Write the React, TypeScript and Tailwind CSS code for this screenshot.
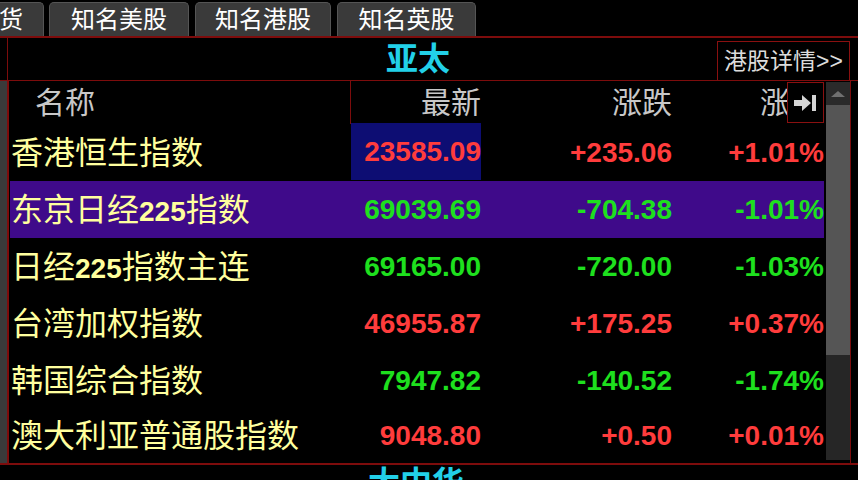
import React from 'react'

type Quote = {
  name: string
  last: string
  chg: string
  pct: string
  up: boolean
}

const quotes: Quote[] = [
  { name: '香港恒生指数', last: '23585.09', chg: '+235.06', pct: '+1.01%', up: true },
  { name: '东京日经225指数', last: '69039.69', chg: '-704.38', pct: '-1.01%', up: false },
  { name: '日经225指数主连', last: '69165.00', chg: '-720.00', pct: '-1.03%', up: false },
  { name: '台湾加权指数', last: '46955.87', chg: '+175.25', pct: '+0.37%', up: true },
  { name: '韩国综合指数', last: '7947.82', chg: '-140.52', pct: '-1.74%', up: false },
  { name: '澳大利亚普通股指数', last: '9048.80', chg: '+0.50', pct: '+0.01%', up: true },
]

// digits inside a name are drawn in the bold latin face
function Name({ text }: { text: string }) {
  return (
    <>
      {text.split(/(225)/).map((part, i) =>
        part === '225' ? (
          <span key={i} className="text-[28px] font-bold">
            {part}
          </span>
        ) : (
          <span key={i}>{part}</span>
        )
      )}
    </>
  )
}

function PinIcon() {
  return (
    <svg width="26" height="18" viewBox="0 0 26 18">
      <rect x="1" y="6" width="9" height="6" fill="#d4d4d4" />
      <polygon points="9,1 18,9 9,17" fill="#d4d4d4" />
      <rect x="19" y="1" width="4" height="16" fill="#d4d4d4" />
    </svg>
  )
}

export default function App() {
  return (
    <div className="w-[858px] h-[480px] overflow-hidden bg-black flex flex-col font-['Liberation_Sans','Noto_Sans_CJK_SC',sans-serif]">
      {/* market tabs */}
      <div className="h-[36px] shrink-0 flex items-end">
        <div className="w-[45px] h-[34px] rounded-tr-[5px] bg-[#3a3a3a] border-t border-r border-[#555] flex items-center text-white text-[24px] leading-none -ml-[1px]">
          货
        </div>
        <div className="ml-[5px] w-[140px] h-[34px] rounded-t-[5px] bg-[#3a3a3a] border-t border-x border-[#555] flex items-center justify-center text-white text-[24px] leading-none">
          知名美股
        </div>
        <div className="ml-[6px] w-[136px] h-[34px] rounded-t-[5px] bg-[#3a3a3a] border-t border-x border-[#555] flex items-center justify-center text-white text-[24px] leading-none">
          知名港股
        </div>
        <div className="ml-[6px] w-[139px] h-[34px] rounded-t-[5px] bg-[#3a3a3a] border-t border-x border-[#555] flex items-center justify-center text-white text-[24px] leading-none">
          知名英股
        </div>
      </div>
      <div className="h-[2px] shrink-0 bg-[#7d0c0c]" />

      {/* region title */}
      <div className="h-[43px] shrink-0 flex border-b border-[#7d0c0c]">
        <div className="w-[8px] border-r border-[#7d0c0c]" />
        <div className="flex-1 pl-[378px] flex items-center text-[#22d0e8] text-[32px] font-bold leading-none">
          亚太
        </div>
        <div className="w-[133px] mt-[3px] border border-b-0 border-[#8a1010] flex items-center justify-center text-[#dcdcdc] text-[23px] leading-none">
          港股详情&gt;&gt;
        </div>
        <div className="w-[8px]" />
      </div>

      {/* quote table */}
      <div className="h-[382px] shrink-0 flex">
        <div className="w-[7px] bg-[#3a3a3a]" />
        <div className="w-[2px] bg-[#7d0c0c]" />
        <div className="w-[1px]" />
        <div className="w-[814px] flex flex-col">
          <div className="h-[43px] shrink-0 flex items-center text-[#c8c8c8] text-[30px] leading-none">
            <div className="w-[341px] h-full border-r border-[#7d0c0c] pl-[25px] flex items-center">名称</div>
            <div className="w-[130px] text-right">最新</div>
            <div className="w-[191px] text-right">涨跌</div>
            <div className="w-[115px] overflow-hidden whitespace-nowrap pl-[88px]">涨幅</div>
            <div className="w-[37px] h-[41px] border border-[#8a1010] flex items-center justify-center">
              <PinIcon />
            </div>
          </div>
          {quotes.map((q, i) => {
            const color = q.up ? 'text-[#ff3c3c]' : 'text-[#1ee01e]'
            return (
              <div
                key={q.name}
                className={`${i === 5 ? 'h-[54px]' : 'h-[57px]'} shrink-0 flex items-center ${
                  i === 1 ? 'bg-[#3f0a8a]' : ''
                }`}
              >
                <div className="w-[341px] pl-[1px] text-[#ffff9e] text-[32px] leading-none whitespace-nowrap">
                  <Name text={q.name} />
                </div>
                <div
                  className={`w-[130px] h-full flex items-center justify-end text-[28px] font-bold ${color} ${
                    i === 0 ? 'bg-[#0d0d73] mb-[2px]' : ''
                  }`}
                >
                  {q.last}
                </div>
                <div className={`w-[191px] text-right text-[28px] font-bold ${color}`}>{q.chg}</div>
                <div className={`w-[152px] text-right text-[28px] font-bold ${color}`}>{q.pct}</div>
              </div>
            )
          })}
        </div>
        <div className="w-[2px]" />
        {/* scrollbar */}
        <div className="w-[24px] mt-[1px] mb-[3px] flex flex-col">
          <div className="h-[23px] bg-[#2a2a2a] flex items-center justify-center">
            <div className="w-0 h-0 border-l-[7px] border-r-[7px] border-b-[6px] border-l-transparent border-r-transparent border-b-[#707070]" />
          </div>
          <div className="h-[250px] bg-[#555555]" />
          <div className="flex-1 bg-[#262626]" />
        </div>
        <div className="w-[1px] bg-[#7d0c0c]" />
        <div className="w-[7px]" />
      </div>
      <div className="h-[2px] shrink-0 bg-[#7d0c0c]" />

      {/* next region */}
      <div className="flex-1 pl-[368px] pt-[2px] text-[#22d0e8] text-[32px] font-bold leading-none">
        大中华
      </div>
    </div>
  )
}
